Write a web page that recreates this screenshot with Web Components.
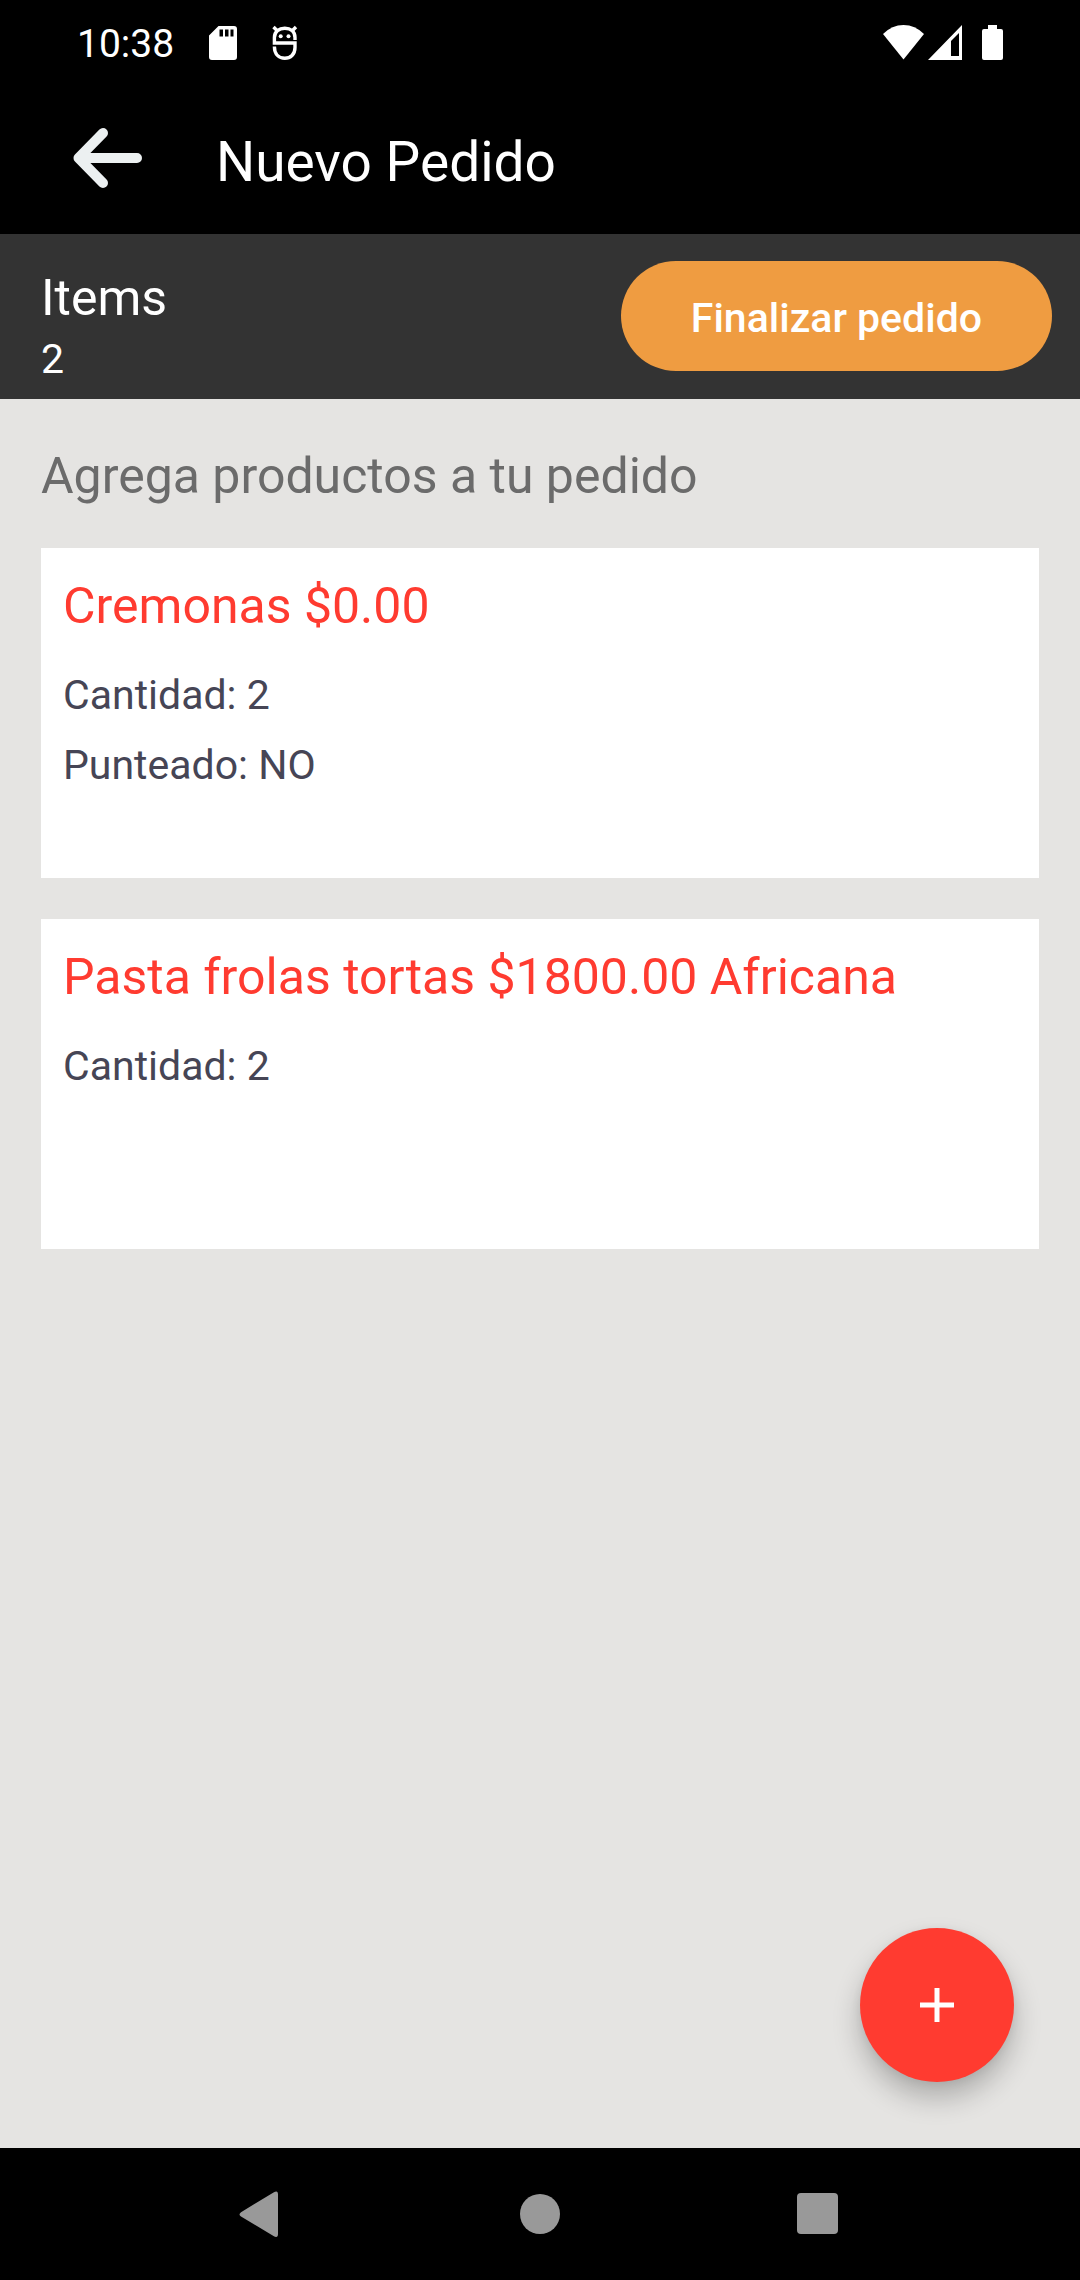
<!DOCTYPE html>
<html lang="es">
<head>
<meta charset="utf-8">
<meta name="viewport" content="width=device-width, initial-scale=1">
<title>Nuevo Pedido</title>
<style>
  body { margin: 0; font-family: Roboto, "Noto Sans", sans-serif; background: #e5e4e2; }
</style>
</head>
<body>
<order-screen>
  <status-bar slot="top" time="10:38"></status-bar>
  <app-bar slot="top">Nuevo Pedido</app-bar>
  <order-summary slot="top" label="Items" count="2">Finalizar pedido</order-summary>
  <span slot="heading">Agrega productos a tu pedido</span>
  <product-card>
    <span slot="title">Cremonas $0.00</span>
    <product-detail>Cantidad: 2</product-detail>
    <product-detail>Punteado: NO</product-detail>
  </product-card>
  <product-card>
    <span slot="title">Pasta frolas tortas $1800.00 Africana</span>
    <product-detail>Cantidad: 2</product-detail>
  </product-card>
  <add-button slot="action"></add-button>
  <nav-bar slot="bottom"></nav-bar>
</order-screen>

<script>
  const define = (name, markup, setup) => {
    const template = document.createElement('template');
    template.innerHTML = markup;
    customElements.define(name, class extends HTMLElement {
      constructor() {
        super();
        this.attachShadow({ mode: 'open' }).append(template.content.cloneNode(true));
      }
      connectedCallback() {
        if (setup) setup(this, this.shadowRoot);
      }
    });
  };

  define('order-screen', `
    <style>
      :host { display: flex; flex-direction: column; min-height: 100vh; }
      main { flex: 1; position: relative; padding: 47px 41px 41px; }
      h2 { margin: 0 0 42px; font-size: 50px; line-height: 60px; font-weight: 400; color: #6b6b6b; }
      .list { display: flex; flex-direction: column; gap: 41px; }
      .action { position: absolute; right: 66px; bottom: 66px; }
    </style>
    <slot name="top"></slot>
    <main>
      <h2><slot name="heading"></slot></h2>
      <div class="list"><slot></slot></div>
      <div class="action"><slot name="action"></slot></div>
    </main>
    <slot name="bottom"></slot>`);

  define('status-bar', `
    <style>
      :host { display: flex; align-items: center; box-sizing: border-box; height: 80px; padding: 8px 77px 0; background: #000; color: #fff; }
      time { font-size: 39px; line-height: 44px; }
      svg { display: block; overflow: visible; fill: currentColor; }
      .notices { display: flex; gap: 35px; margin-left: 35px; }
      .system { display: flex; margin-left: auto; }
      .battery { margin-left: 20px; }
      .signal { margin-left: 4px; }
    </style>
    <time></time>
    <div class="notices">
      <svg width="28" height="36" viewBox="0 0 28 36"><path fill-rule="evenodd" d="M9.500 0H25a3 3 0 0 1 3 3V31a3 3 0 0 1-3 3H3a3 3 0 0 1-3-3V9.500ZM10.500 3.500v7h3.500V3.500ZM16 3.500v7h3.500V3.500ZM21.500 3.500v7h3V3.500Z"/></svg>
      <svg width="26" height="36" viewBox="0 0 26 36">
        <g fill="none" stroke="#fff" stroke-width="3.400">
          <path d="M23 14V11.500C23 5.500 18.500 2.200 12.800 2.200S2.400 5.500 2.400 11.500V17H23V21.500C23 28.500 18.500 32.300 12.800 32.300S2.400 28.500 2.400 20.500"/>
          <path d="M1.500 1 5.500 5M24 1 20 5"/>
        </g>
        <circle cx="8.700" cy="10.200" r="2"/><circle cx="16.500" cy="10.200" r="2"/>
      </svg>
    </div>
    <div class="system">
      <svg width="41" height="36" viewBox="0 0 41 36"><path d="M0 8Q9-1 20.500-1T41 8L20.500 33.500Z"/></svg>
      <svg class="signal" width="34" height="36" viewBox="0 0 34 36"><path fill-rule="evenodd" d="M34-1V34H0ZM31 7 23 15V30H31Z"/></svg>
      <svg class="battery" width="21" height="36" viewBox="0 0 21 36"><path d="M6-1H15V3H19a2 2 0 0 1 2 2V32a2 2 0 0 1-2 2H2a2 2 0 0 1-2-2V5A2 2 0 0 1 2 3H6Z"/></svg>
    </div>`,
    (host, root) => { root.querySelector('time').textContent = host.getAttribute('time'); });

  define('app-bar', `
    <style>
      :host { display: flex; align-items: center; box-sizing: border-box; height: 154px; padding: 2px 52px 0; background: #000; color: #fff; }
      button { display: flex; align-items: center; justify-content: center; width: 110px; height: 110px; padding: 0; border: 0; background: none; color: #ecf0f1; }
      h1 { margin: 0; padding: 7px 0 0 54px; font-size: 55px; line-height: 64px; font-weight: 400; }
    </style>
    <button type="button" aria-label="Volver">
      <svg width="70" height="62" viewBox="0 0 70 62" fill="none" stroke="currentColor" stroke-width="10" stroke-linecap="round" stroke-linejoin="round"><path d="M31 6 6.500 31 31 56M8 31H65"/></svg>
    </button>
    <h1><slot></slot></h1>`);

  define('order-summary', `
    <style>
      :host { display: flex; align-items: flex-start; justify-content: space-between; background: #333; color: #fff; }
      dl { margin: 0; padding: 34px 0 9px 41px; line-height: 61px; }
      dt { font-size: 50px; }
      dd { margin: 0; font-size: 41px; }
      button { height: 110px; margin: 27px 28px 0 0; padding: 4px 70px 0; border: 0; border-radius: 55px; background: #ef9c41; color: #fff; font: 500 41px/48px Roboto, "Noto Sans", sans-serif; }
    </style>
    <dl><dt></dt><dd></dd></dl>
    <button type="button"><slot></slot></button>`,
    (host, root) => {
      root.querySelector('dt').textContent = host.getAttribute('label');
      root.querySelector('dd').textContent = host.getAttribute('count');
    });

  define('product-card', `
    <style>
      :host { display: block; box-sizing: border-box; min-height: 330px; padding: 28px 22px; background: #fff; }
      h3 { margin: 0 0 24px; font-size: 50px; line-height: 60px; font-weight: 400; color: #ff3b30; }
    </style>
    <h3><slot name="title"></slot></h3>
    <slot></slot>`);

  define('product-detail', `
    <style>
      :host { display: block; font-size: 41px; line-height: 70px; color: #464555; }
    </style>
    <slot></slot>`);

  define('add-button', `
    <style>
      :host { display: block; }
      button { display: flex; align-items: center; justify-content: center; width: 154px; height: 154px; padding: 0; border: 0; border-radius: 50%; background: #ff3b30; color: #fff; box-shadow: 0 16px 28px rgba(0, 0, 0, .24), 0 2px 10px rgba(0, 0, 0, .06); }
    </style>
    <button type="button" aria-label="Agregar producto">
      <svg width="34" height="34" viewBox="0 0 34 34" stroke="currentColor" stroke-width="5"><path d="M17 0V34M0 17H34"/></svg>
    </button>`);

  define('nav-bar', `
    <style>
      :host { display: block; background: #000; }
      nav { display: flex; justify-content: center; gap: 168px; }
      button { display: flex; align-items: center; justify-content: center; width: 110px; height: 132px; padding: 0; border: 0; background: none; color: #999; }
      svg { fill: currentColor; }
    </style>
    <nav>
      <button type="button" aria-label="Atrás"><svg width="46" height="46" viewBox="0 0 46 46"><path d="M34.500 1.500Q39-1.500 39 3.500V43Q39 47.500 34.500 45L2 25.500Q-1 23.500 2 21.200Z"/></svg></button>
      <button type="button" aria-label="Inicio"><svg width="40" height="40" viewBox="0 0 40 40"><circle cx="20" cy="20" r="20"/></svg></button>
      <button type="button" aria-label="Recientes"><svg width="42" height="42" viewBox="0 0 42 42"><rect width="41" height="41" rx="4"/></svg></button>
    </nav>`);
</script>
</body>
</html>
